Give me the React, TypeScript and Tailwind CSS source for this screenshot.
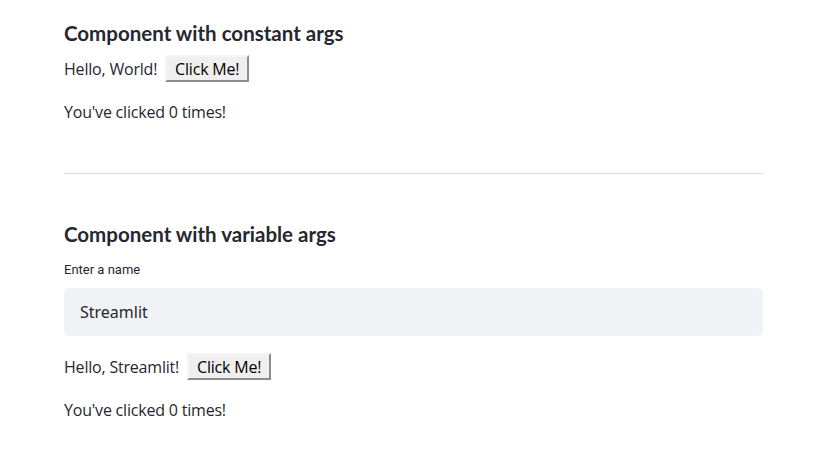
import { useState } from 'react';

function ClickCounter({ name }: { name: string }) {
    const [count, setCount] = useState(0);

    return (
        <div className="font-['Open_Sans',sans-serif] text-[16px] tracking-[-0.2px] text-[#262730]">
            <div className="flex items-center h-[27px]">
                <span>Hello, {name}!</span>
                <button
                    onClick={() => setCount(count + 1)}
                    className="ml-[8px] h-[27px] w-[84px] bg-[#efefef] border-2 border-t-[#f5f5f5] border-l-[#f5f5f5] border-r-[#8c8c8c] border-b-[#8c8c8c] text-[16px] text-black leading-none"
                >
                    Click Me!
                </button>
            </div>
            <p className="mt-[18px] leading-[24px]">You've clicked {count} times!</p>
        </div>
    );
}

export default function App() {
    const [name, setName] = useState('Streamlit');

    return (
        <div className="min-h-[459px] bg-white text-[#262730] font-['Noto_Sans',sans-serif]">
            <div className="w-[699px] ml-[64px] pt-[19px]">
                {/* Constant args */}
                <h2 className="text-[20.5px] leading-[28px] font-bold font-['Lato',sans-serif]">Component with constant args</h2>
                <div className="mt-[8px]">
                    <ClickCounter name="World" />
                </div>

                <hr className="mt-[49px] border-t border-[#dcdcdc]" />

                {/* Variable args */}
                <h2 className="mt-[46px] text-[20.5px] leading-[28px] font-bold font-['Lato',sans-serif]">Component with variable args</h2>
                <label className="block mt-[14px] text-[13px] leading-[16px] font-['Roboto',sans-serif]">Enter a name</label>
                <input
                    value={name}
                    onChange={(e) => setName(e.target.value)}
                    className="mt-[10px] w-full h-[48px] rounded-[6px] bg-[#f0f2f6] px-[16px] text-[16px] outline-none"
                />
                <div className="mt-[17px]">
                    <ClickCounter name={name} />
                </div>
            </div>
        </div>
    );
}
